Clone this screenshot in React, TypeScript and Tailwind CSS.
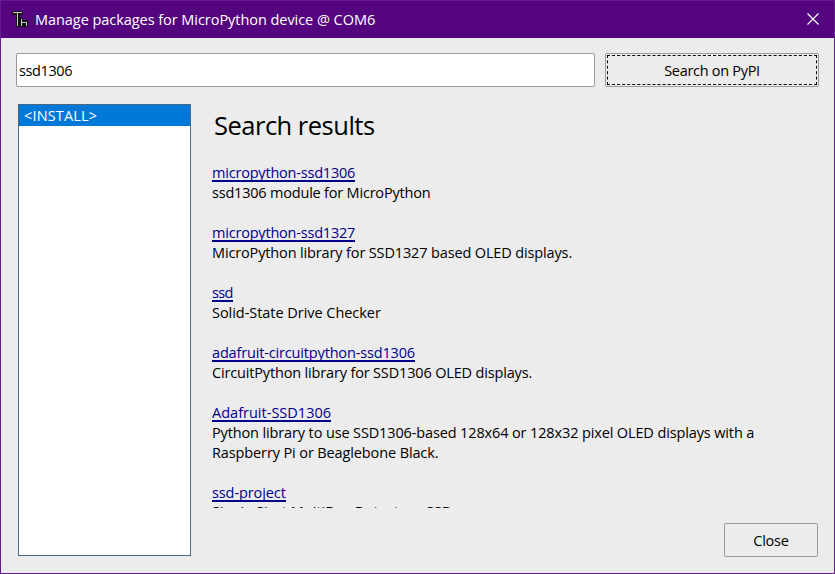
import React from "react";

type Line = { text: string; style: string };
type Result = { name: string; style: string; lines: Line[] };

const results: Result[] = [
  { name: "micropython-ssd1306", style: "tracking-[-0.2px]", lines: [{ text: "ssd1306 module for MicroPython", style: "tracking-[-0.2px]" }] },
  { name: "micropython-ssd1327", style: "tracking-[-0.2px]", lines: [{ text: "MicroPython library for SSD1327 based OLED displays.", style: "tracking-[-0.14px]" }] },
  { name: "ssd", style: "tracking-[-0.6px]", lines: [{ text: "Solid-State Drive Checker", style: "tracking-[-0.04px]" }] },
  { name: "adafruit-circuitpython-ssd1306", style: "tracking-[-0.16px]", lines: [{ text: "CircuitPython library for SSD1306 OLED displays.", style: "tracking-[-0.16px]" }] },
  {
    name: "Adafruit-SSD1306",
    style: "tracking-[0.01px]",
    lines: [
      { text: "Python library to use SSD1306-based 128x64 or 128x32 pixel OLED displays with a", style: "tracking-[-0.13px]" },
      { text: "Raspberry Pi or Beaglebone Black.", style: "tracking-[-0.12px]" },
    ],
  },
  {
    name: "ssd-project",
    style: "tracking-[-0.1px]",
    lines: [{ text: "Single Shot MultiBox Detector - SSD", style: "leading-[17px] tracking-[0.02px] [clip-path:inset(4px_0_0)]" }],
  },
];

function TitleBar() {
  return (
    <header className="flex h-[37px] shrink-0 items-center bg-[#55047f] pl-[10px] pr-[15px] text-white">
      <svg width="18" height="19" viewBox="0 0 18 19">
        <path d="M1 1H12V5H9V17H5V5H1ZM9 8H12V10H17V17H9Z" fill="#151018" />
        <path d="M2 2.500H11M6.500 3V16M10.500 9V16M11 12.500H15M15.500 12V16" stroke="#c9c9c9" fill="none" />
      </svg>
      <h1 className="ml-[6px] text-[14.5px] leading-5 tracking-[-0.05px]">Manage packages for MicroPython device @ COM6</h1>
      <svg className="relative -top-px ml-auto" width="12" height="12" viewBox="0 0 12 12">
        <path d="M0.500 0.500L11.500 11.500M11.500 0.500L0.500 11.500" stroke="#fff" strokeWidth="1.2" />
      </svg>
    </header>
  );
}

export default function App() {
  return (
    <main className="flex h-[574px] w-[835px] flex-col overflow-hidden border border-[#651b8d] bg-[#ececec] font-['Open_Sans',sans-serif] text-[14.5px] text-black">
      <TitleBar />
      <div className="mt-[15px] flex h-[34px] gap-[10px] px-[15px]">
        <input className="w-[579px] rounded-[2px] border border-[#9e9a91] bg-white px-[2px] pt-[2px] tracking-[-0.4px] outline-none" defaultValue="ssd1306" />
        <button className="w-[214px] rounded-[2px] border border-[#9e9a91] p-px">
          <span className="flex h-full items-center justify-center border border-dashed border-black pt-[2px] tracking-[-0.3px]">Search on PyPI</span>
        </button>
      </div>
      <div className="mt-[17px] flex h-[452px] pl-[17px]">
        <aside className="w-[173px] border border-[#4a6984] bg-white">
          <div className="h-[21px] bg-[#0078d7] pl-[5px] leading-[21px] tracking-[0.15px] text-white">&lt;INSTALL&gt;</div>
        </aside>
        <div className="ml-[20px] flex w-[607px] flex-col">
          <section className="h-[404px] shrink-0 overflow-hidden pl-px">
            <h2 className="pl-[2px] text-[25.5px] leading-[42px] tracking-[-0.5px]">Search results</h2>
            <ul className="mt-[17px] flex flex-col gap-5">
              {results.map((r) => (
                <li key={r.name} className="leading-5">
                  <div className="flex h-5">
                    <a className={`h-[19px] border-b-2 border-[#00008b] text-[#00008b] ${r.style}`}>{r.name}</a>
                  </div>
                  {r.lines.map((l) => (
                    <p key={l.text} className={`h-5 whitespace-nowrap ${l.style}`}>
                      {l.text}
                    </p>
                  ))}
                </li>
              ))}
            </ul>
          </section>
          <button className="mt-[15px] h-[34px] w-[94px] shrink-0 self-end rounded-[2px] border border-[#9e9a91] pt-[2px] tracking-[-0.2px]">Close</button>
        </div>
      </div>
    </main>
  );
}
